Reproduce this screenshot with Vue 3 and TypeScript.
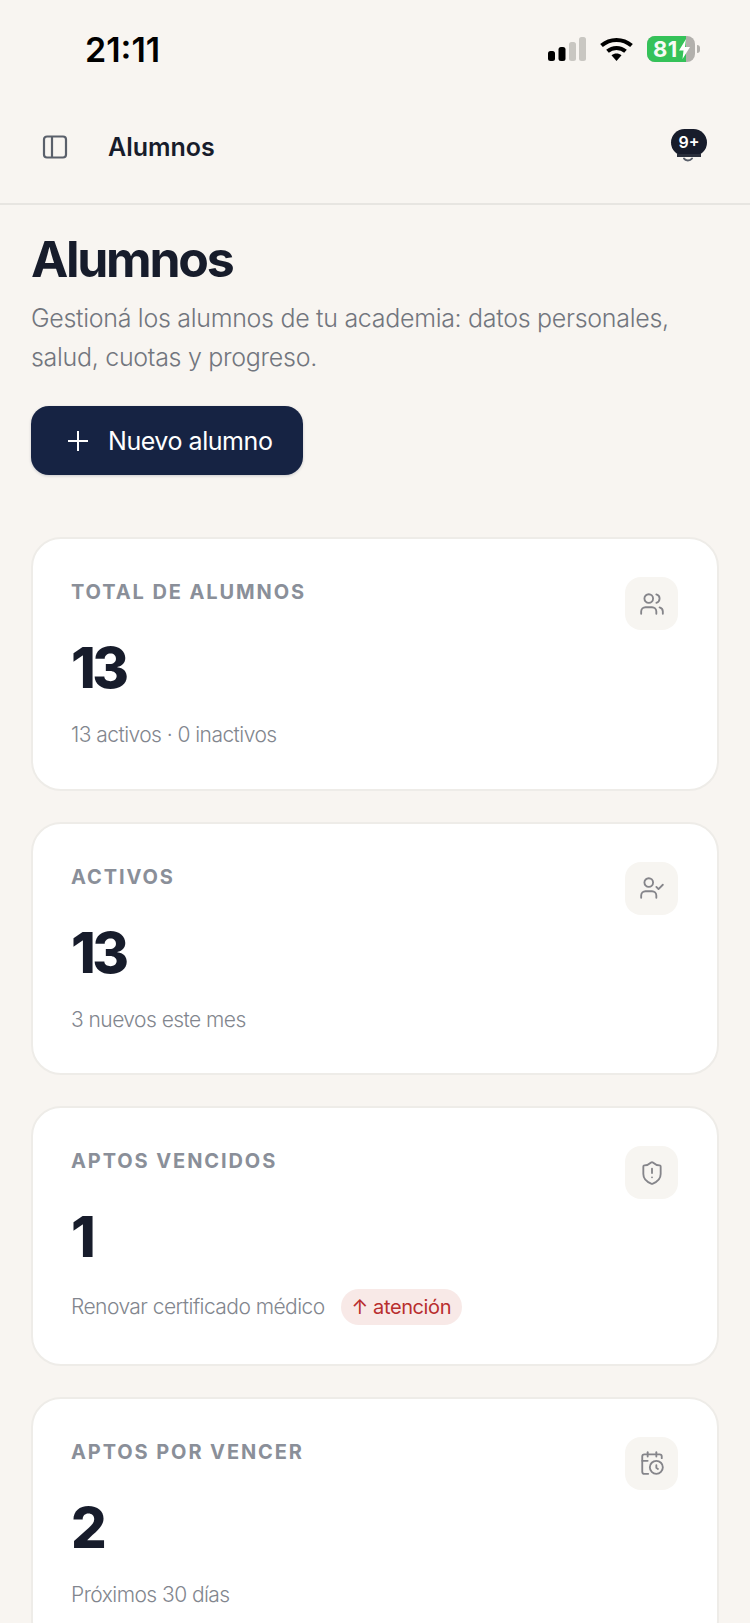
<template>
  <div class="page">
    <div class="status">
      <span class="time">21:11</span>
      <div class="status-icons">
        <svg class="signal" width="38" height="24" viewBox="0 0 38 24">
          <rect x="0" y="14" width="7" height="10" rx="2.5" fill="#000" />
          <rect x="10.5" y="10" width="7" height="14" rx="2.5" fill="#000" />
          <rect x="21" y="5" width="7" height="19" rx="2.5" fill="#c9c7c2" />
          <rect x="31" y="0" width="7" height="24" rx="2.5" fill="#c9c7c2" />
        </svg>
        <svg class="wifi" width="33" height="24" viewBox="0 0 33 24">
          <path d="M1.5 8.5C10 1 23 1 31.5 8.5" fill="none" stroke="#000" stroke-width="4" />
          <path d="M7.5 14.2C12.6 9.8 20.4 9.8 25.5 14.2" fill="none" stroke="#000" stroke-width="4" />
          <path d="M11.5 18.2L16.5 24L21.5 18.2C18.5 15.8 14.5 15.8 11.5 18.2Z" fill="#000" />
        </svg>
        <div class="battery">
          <div class="battery-body">
            <div class="battery-fill"></div>
            <span class="battery-text">81</span>
            <svg class="bolt" width="11" height="20" viewBox="0 0 11 20">
              <path d="M7 0L0 11.5H4.5L3.5 20L11 8H6Z" fill="#fff" />
            </svg>
          </div>
          <div class="battery-cap"></div>
        </div>
      </div>
    </div>

    <header class="topbar">
      <div class="topbar-left">
        <svg class="panel-icon" width="28" height="28" viewBox="0 0 28 28" fill="none" stroke="#5a606b" stroke-width="2.2">
          <rect x="3" y="3.5" width="22" height="21" rx="3" />
          <path d="M11 3.5V24.5" />
        </svg>
        <span class="topbar-title">Alumnos</span>
      </div>
      <div class="bell">
        <svg class="bell-clapper" width="12" height="6" viewBox="0 0 12 6" fill="none">
          <path d="M2 1.5C3.5 4 8 4 10 1.5" stroke="#5a606b" stroke-width="2" stroke-linecap="round" />
        </svg>
        <span class="bell-badge">9+</span>
      </div>
    </header>

    <main class="content">
      <h1>Alumnos</h1>
      <p class="lead">Gestioná los alumnos de tu academia: datos personales, salud, cuotas y progreso.</p>
      <button class="new-btn">
        <svg width="24" height="24" viewBox="0 0 24 24" fill="none" stroke="#fff" stroke-width="2">
          <path d="M12 2V22M2 12H22" />
        </svg>
        <span>Nuevo alumno</span>
      </button>

      <section v-for="card in cards" :key="card.label" class="card">
        <div class="card-top">
          <div>
            <div class="card-label">{{ card.label }}</div>
            <div class="card-value">{{ card.value }}</div>
          </div>
          <div class="card-icon">
            <svg width="26" height="26" viewBox="0 0 24 24" fill="none" stroke="#85858a" stroke-width="1.7" stroke-linecap="round" stroke-linejoin="round">
              <path v-for="d in card.icon" :key="d" :d="d" />
            </svg>
          </div>
        </div>
        <div class="card-foot">
          <span class="card-note">{{ card.note }}</span>
          <span v-if="card.alert" class="pill">↑ {{ card.alert }}</span>
        </div>
      </section>
    </main>
  </div>
</template>

<script setup lang="ts">
interface StatCard {
  label: string
  value: string
  note: string
  alert?: string
  icon: string[]
}

const cards: StatCard[] = [
  {
    label: 'TOTAL DE ALUMNOS',
    value: '13',
    note: '13 activos · 0 inactivos',
    icon: [
      'M16 21v-2a4 4 0 0 0-4-4H6a4 4 0 0 0-4 4v2',
      'M13 7a4 4 0 1 1-8 0 4 4 0 0 1 8 0z',
      'M22 21v-2a4 4 0 0 0-3-3.87',
      'M16 3.13a4 4 0 0 1 0 7.75',
    ],
  },
  {
    label: 'ACTIVOS',
    value: '13',
    note: '3 nuevos este mes',
    icon: [
      'M16 21v-2a4 4 0 0 0-4-4H6a4 4 0 0 0-4 4v2',
      'M13 7a4 4 0 1 1-8 0 4 4 0 0 1 8 0z',
      'm16 11 2 2 4-4',
    ],
  },
  {
    label: 'APTOS VENCIDOS',
    value: '1',
    note: 'Renovar certificado médico',
    alert: 'atención',
    icon: [
      'M20 13c0 5-3.5 7.5-7.66 8.95a1 1 0 0 1-.67-.01C7.5 20.5 4 18 4 13V6a1 1 0 0 1 1-1c2 0 4.5-1.2 6.24-2.72a1.17 1.17 0 0 1 1.52 0C14.51 3.81 17 5 19 5a1 1 0 0 1 1 1z',
      'M12 8v4',
      'M12 16h.01',
    ],
  },
  {
    label: 'APTOS POR VENCER',
    value: '2',
    note: 'Próximos 30 días',
    icon: [
      'M21 7.5V6a2 2 0 0 0-2-2H5a2 2 0 0 0-2 2v14a2 2 0 0 0 2 2h3.5',
      'M16 2v4',
      'M8 2v4',
      'M3 10h5',
      'M17.5 17.5 16 16.3V14',
      'M22 16a6 6 0 1 1-12 0 6 6 0 0 1 12 0z',
    ],
  },
]
</script>

<style>
html, body {
  margin: 0;
  background: #f8f5f1;
}
</style>

<style scoped>
.page {
  width: 750px;
  height: 1623px;
  overflow: hidden;
  background: #f8f5f1;
  font-family: Inter, "Liberation Sans", sans-serif;
  color: #171c2b;
}

.status {
  height: 100px;
  box-sizing: border-box;
  padding: 30px 50px 0 85px;
  display: flex;
  justify-content: space-between;
  align-items: flex-start;
}

.time {
  font-size: 34px;
  line-height: 40px;
  font-weight: 600;
  color: #000;
  letter-spacing: 0;
}

.status-icons {
  display: flex;
  align-items: center;
  gap: 14px;
  margin-top: 6px;
}

.battery {
  display: flex;
  align-items: center;
  gap: 2px;
}

.battery-body {
  position: relative;
  width: 48px;
  height: 26px;
  border-radius: 8px;
  background: #b2b0ac;
  overflow: hidden;
  display: flex;
  align-items: center;
  padding-left: 6px;
  box-sizing: border-box;
}

.battery-fill {
  position: absolute;
  left: 0;
  top: 0;
  bottom: 0;
  width: 39px;
  background: #35c259;
}

.battery-text {
  position: relative;
  font-size: 22px;
  font-weight: 700;
  color: #f6fbf4;
  line-height: 26px;
  letter-spacing: 0.4px;
}

.bolt {
  position: relative;
  margin-left: 1px;
}

.battery-cap {
  width: 3px;
  height: 8px;
  border-radius: 0 3px 3px 0;
  background: #b2b0ac;
}

.topbar {
  height: 105px;
  box-sizing: border-box;
  padding: 0 43px 10px 41px;
  border-bottom: 2px solid #e7e5e1;
  display: flex;
  align-items: center;
  justify-content: space-between;
}

.topbar-left {
  display: flex;
  align-items: center;
  gap: 39px;
}

.panel-icon {
  display: block;
}

.topbar-title {
  font-size: 25px;
  font-weight: 600;
}

.bell {
  position: relative;
  width: 36px;
  height: 36px;
}

.bell::after {
  content: "";
  position: absolute;
  left: 6px;
  top: 25px;
  width: 24px;
  height: 3px;
  background: #2a2f3c;
}

.bell-clapper {
  position: absolute;
  left: 11px;
  top: 28px;
}

.bell-badge {
  position: absolute;
  left: 0;
  top: 0;
  width: 36px;
  height: 27px;
  border-radius: 14px;
  background: #171c2b;
  color: #fff;
  font-size: 16px;
  font-weight: 600;
  line-height: 27px;
  text-align: center;
}

.content {
  padding: 24px 31px 0;
}

h1 {
  margin: 0;
  font-size: 50px;
  line-height: 60px;
  font-weight: 700;
  letter-spacing: -2.3px;
}

.lead {
  margin: 10px 0 0;
  font-size: 25px;
  line-height: 39px;
  color: #72767e;
  font-weight: 300;
  letter-spacing: -0.3px;
}

.new-btn {
  margin-top: 29px;
  width: 272px;
  height: 69px;
  border: none;
  border-radius: 18px;
  background: #162343;
  color: #fff;
  font-family: inherit;
  font-size: 25px;
  font-weight: 400;
  display: flex;
  align-items: center;
  padding: 0 0 0 35px;
  gap: 18px;
  letter-spacing: -0.45px;
  box-shadow: 0 1px 3px rgba(22, 35, 67, 0.2);
}

.card {
  margin-top: 31px;
  border: 2px solid #eeece8;
  border-radius: 30px;
  background: #fff;
  padding: 38px 39px 38.5px 38px;
  box-sizing: border-box;
}

.new-btn + .card {
  margin-top: 62px;
}

.card-top {
  display: flex;
  justify-content: space-between;
  align-items: flex-start;
}

.card-label {
  margin-top: 1px;
  font-size: 20px;
  line-height: 28px;
  font-weight: 700;
  letter-spacing: 1.9px;
  color: #8a8f99;
}

.card-value {
  margin-top: 28px;
  font-size: 56px;
  line-height: 68px;
  font-weight: 800;
  letter-spacing: -3.5px;
}

.card-icon {
  width: 53px;
  height: 53px;
  border-radius: 16px;
  background: #f7f5f1;
  display: flex;
  align-items: center;
  justify-content: center;
}

.card-foot {
  display: flex;
  align-items: center;
  gap: 16px;
  margin-top: 18px;
  min-height: 30px;
}

.card-note {
  font-size: 21px;
  line-height: 30px;
  font-weight: 300;
  color: #82868e;
  letter-spacing: -0.55px;
}

.pill {
  height: 36px;
  line-height: 36px;
  padding: 0 11px;
  border-radius: 18px;
  background: #f8e9e7;
  color: #b82e2e;
  font-size: 20px;
  letter-spacing: -0.4px;
}
</style>
